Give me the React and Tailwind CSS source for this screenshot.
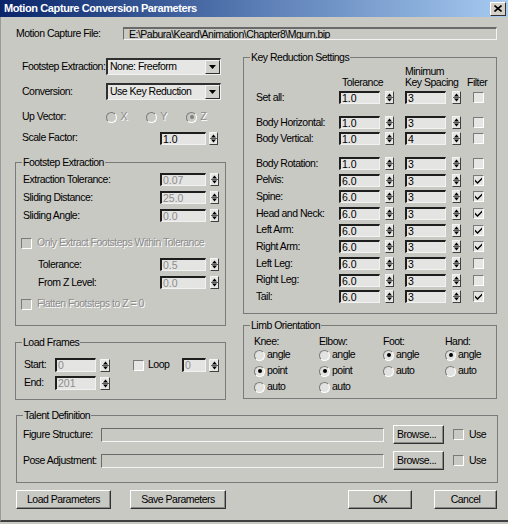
import React from "react";

const dimText = "text-[#8c8c8c] [text-shadow:1px_1px_0_#ffffff]";

const Spin = ({ className = "" }) => (
  <div
    className={
      "flex h-[13px] w-[9px] shrink-0 items-center justify-center border border-t-[#f4f4f4] border-l-[#f4f4f4] border-b-[#404040] border-r-[#404040] bg-[#e6e6e4] " +
      className
    }
  >
    <svg width="7" height="11" viewBox="0 0 7 11">
      <path d="M3.5 1.5 L6 4.5 H1 Z" fill="#000" />
      <path d="M0 5.5 H7" stroke="#5a5a5a" strokeWidth="1" />
      <path d="M1 6.5 H6 L3.5 9.5 Z" fill="#000" />
    </svg>
  </div>
);

const Field = ({ value, className = "", dim }) => (
  <div
    className={
      "h-[13px] shrink-0 overflow-hidden whitespace-nowrap border-t-2 border-l-2 border-b border-r border-t-[#1e1e1e] border-l-[#1e1e1e] border-b-[#f2f2f2] border-r-[#f2f2f2] bg-[#e4e4e2] pl-[1px] text-[10.5px] leading-[10px] " +
      (dim ? "text-[#8c8c8c]" : "text-black") +
      " " +
      className
    }
  >
    {value}
  </div>
);

const Check = ({ on, dim }) => (
  <div
    className={
      "flex h-[11px] w-[11px] shrink-0 items-center justify-center border border-t-[#7a7a7a] border-l-[#7a7a7a] border-b-white border-r-white " +
      (dim ? "bg-[#c9c9c4]" : "bg-[#e6e6e4]")
    }
  >
    {on && (
      <svg width="7" height="7" viewBox="0 0 7 7">
        <path d="M0 2.5 L2.5 5 L7 0.5 V2.5 L2.5 7 L0 4.5 Z" fill="#000" />
      </svg>
    )}
  </div>
);

const Radio = ({ on, dim }) => (
  <div
    className={
      "flex h-[11px] w-[11px] shrink-0 items-center justify-center rounded-full border border-t-[#7a7a7a] border-l-[#7a7a7a] border-b-white border-r-white " +
      (dim ? "bg-[#c9c9c4]" : "bg-[#e2e2e0]")
    }
  >
    {on && <div className={"h-[4px] w-[4px] rounded-full " + (dim ? "bg-[#808080]" : "bg-black")} />}
  </div>
);

const Btn = ({ children, className = "" }) => (
  <div
    className={
      "flex shrink-0 items-center justify-center border border-t-white border-l-white border-b-[#303030] border-r-[#303030] text-[10.5px] tracking-[-0.5px] shadow-[inset_-1px_-1px_0_#8a8a8a] " +
      className
    }
  >
    {children}
  </div>
);

const Combo = ({ value }) => (
  <div className="flex h-[17px] w-[115px] items-center border-t-2 border-l-2 border-b border-r border-t-[#303030] border-l-[#303030] border-b-[#f2f2f2] border-r-[#f2f2f2] bg-[#e6e6e4]">
    <span className="flex-1 pl-[2px] text-[10.5px] tracking-[-0.5px]">{value}</span>
    <div className="flex h-[14px] w-[15px] items-center justify-center border border-t-[#f4f4f4] border-l-[#f4f4f4] border-b-[#303030] border-r-[#303030] bg-[#d0d0cc]">
      <svg width="7" height="4" viewBox="0 0 7 4">
        <path d="M0 0 H7 L3.5 4 Z" fill="#000" />
      </svg>
    </div>
  </div>
);

const Group = ({ title, className = "", children }) => (
  <fieldset className={"border border-[#7a7a7a] " + className}>
    <legend className="ml-[6px] px-[1px] text-[10.5px] leading-[12px] tracking-[-0.5px]">{title}</legend>
    {children}
  </fieldset>
);

const keyRows = [
  ["Body Rotation:", "1.0", "3", false],
  ["Pelvis:", "6.0", "3", true],
  ["Spine:", "6.0", "3", true],
  ["Head and Neck:", "6.0", "3", true],
  ["Left Arm:", "6.0", "3", true],
  ["Right Arm:", "6.0", "3", true],
  ["Left Leg:", "6.0", "3", false],
  ["Right Leg:", "6.0", "3", false],
  ["Tail:", "6.0", "3", true],
];

const KeyRow = ({ label, tol, key2, on, className = "" }) => (
  <div className={"flex h-[13px] items-center " + className}>
    <span className="ml-[12px] w-[83px] text-[10.5px] tracking-[-0.5px]">{label}</span>
    <Field value={tol} className="w-[41px]" />
    <Spin className="ml-[5px]" />
    <Field value={key2} className="ml-[11px] w-[41px]" />
    <Spin className="ml-[6px]" />
    <div className="ml-[12px]">
      <Check on={on} />
    </div>
  </div>
);

const FootRow = ({ label, value, className = "", labelClass = "pl-[7px]" }) => (
  <div className={"flex h-[13px] items-center " + className}>
    <span className={"flex-1 text-[10.5px] tracking-[-0.5px] " + labelClass}>{label}</span>
    <Field value={value} dim className="w-[46px]" />
    <Spin className="ml-[4px] mr-[6px]" />
  </div>
);

const LimbCol = ({ title, items, className = "" }) => (
  <div className={"flex flex-col " + className}>
    <div className="h-[11px] text-[10.5px] leading-[11px] tracking-[-0.5px]">{title}</div>
    {items.map(([name, on]) => (
      <div key={name} className="flex h-[16px] items-center">
        <Radio on={on} />
        <span className="ml-[2px] text-[10.5px] tracking-[-0.5px]">{name}</span>
      </div>
    ))}
  </div>
);

export default function App() {
  return (
    <div className="h-[524px] w-[508px] overflow-hidden bg-[#c9c9c4] font-['Liberation_Sans',Arial,sans-serif] text-black">
      {/* title bar */}
      <div className="flex h-[17px] items-center bg-linear-to-r from-[#0a246a] via-[#5a7cb4] to-[#a6caf0]">
        <span className="pl-[4px] text-[11px] font-bold tracking-[-0.4px] text-white">
          Motion Capture Conversion Parameters
        </span>
        <div className="ml-auto mr-[2px] flex h-[14px] w-[16px] items-center justify-center border border-t-white border-l-white border-b-[#303030] border-r-[#303030] bg-[#d4d0c8]">
          <svg width="8" height="7" viewBox="0 0 8 7">
            <path d="M0.5 0.5 L7.5 6.5 M7.5 0.5 L0.5 6.5" stroke="#000" strokeWidth="1.6" />
          </svg>
        </div>
      </div>

      {/* body */}
      <div className="flex h-[505px] flex-col border-b-2 border-l border-b-[#404040] border-l-[#9a9a9a] pl-[14px] pr-[11px] pt-[10px]">
        <div className="flex h-[13px] items-center">
          <span className="w-[108px] pl-[1px] text-[10.5px] tracking-[-0.5px]">Motion Capture File:</span>
          <div className="h-[13px] flex-1 overflow-hidden whitespace-nowrap border-t-2 border-l border-b border-r border-t-[#6a6a6a] border-l-[#6a6a6a] border-b-[#f4f4f4] border-r-[#f4f4f4] pl-[5px] text-[10.5px] leading-[10px] tracking-[-0.5px]">
            E:\Pabura\Keard\Animation\Chapter8\Mgurn.bip
          </div>
        </div>

        <div className="mt-[11px] flex items-start">
          {/* left column */}
          <div className="flex w-[211px] flex-col">
            <div className="mt-[7px] flex h-[17px] items-center">
              <span className="w-[91px] pl-[7px] text-[10.5px] tracking-[-0.5px]">Footstep Extraction:</span>
              <Combo value="None: Freeform" />
            </div>
            <div className="mt-[8px] flex h-[17px] items-center">
              <span className="w-[91px] pl-[7px] text-[10.5px] tracking-[-0.5px]">Conversion:</span>
              <Combo value="Use Key Reduction" />
            </div>
            <div className="mt-[11px] flex h-[12px] items-center">
              <span className="w-[96px] pl-[7px] text-[10.5px] tracking-[-0.5px]">Up Vector:</span>
              {[
                ["X", false],
                ["Y", false],
                ["Z", true],
              ].map(([l, on]) => (
                <div key={l} className="flex w-[42px] items-center">
                  <Radio on={on} dim />
                  <span className={"ml-[3px] text-[10.5px] " + dimText}>{l}</span>
                </div>
              ))}
            </div>
            <div className="mt-[8px] flex h-[14px] items-center">
              <span className="w-[145px] pl-[7px] text-[10.5px] tracking-[-0.5px]">Scale Factor:</span>
              <Field value="1.0" className="w-[46px]" />
              <Spin className="ml-[3px]" />
            </div>

            <Group title="Footstep Extraction" className="mt-[11px] h-[170px]">
              <div className="flex flex-col pt-[5px]">
                <FootRow label="Extraction Tolerance:" value="0.07" />
                <FootRow label="Sliding Distance:" value="25.0" className="mt-[5px]" />
                <FootRow label="Sliding Angle:" value="0.0" className="mt-[5px]" />
                <div className="mt-[15px] flex h-[12px] items-center pl-[5px]">
                  <Check dim />
                  <span className={"ml-[5px] text-[10.5px] tracking-[-0.5px] " + dimText}>
                    Only Extract Footsteps Within Tolerance
                  </span>
                </div>
                <FootRow label="Tolerance:" value="0.5" className="mt-[9px]" labelClass="pl-[22px]" />
                <FootRow label="From Z Level:" value="0.0" className="mt-[5px]" labelClass="pl-[22px]" />
                <div className="mt-[9px] flex h-[12px] items-center pl-[5px]">
                  <Check dim />
                  <span className={"ml-[5px] text-[10.5px] tracking-[-0.5px] " + dimText}>
                    Flatten Footsteps to Z = 0
                  </span>
                </div>
              </div>
            </Group>

            <Group title="Load Frames" className="mt-[10px] h-[64px]">
              <div className="flex flex-col pt-[10px]">
                <div className="flex h-[14px] items-center">
                  <span className="w-[39px] pl-[8px] text-[10.5px] tracking-[-0.5px]">Start:</span>
                  <Field value="0" dim className="h-[14px] w-[41px]" />
                  <Spin className="ml-[4px] w-[10px]" />
                  <div className="ml-[23px]">
                    <Check />
                  </div>
                  <span className="ml-[4px] w-[34px] text-[10.5px] tracking-[-0.5px]">Loop</span>
                  <Field value="0" dim className="h-[14px] w-[24px]" />
                  <Spin className="ml-[3px] w-[10px]" />
                </div>
                <div className="mt-[4px] flex h-[14px] items-center">
                  <span className="w-[39px] pl-[8px] text-[10.5px] tracking-[-0.5px]">End:</span>
                  <Field value="201" dim className="h-[14px] w-[41px]" />
                  <Spin className="ml-[4px] w-[10px]" />
                </div>
              </div>
            </Group>
          </div>

          {/* right column */}
          <div className="ml-[17px] flex w-[254px] flex-col">
            <Group title="Key Reduction Settings" className="h-[263px]">
              <div className="flex flex-col">
                <div className="flex items-end pt-[3px] text-[10.5px] leading-[11px] tracking-[-0.5px]">
                  <div className="w-[95px]" />
                  <div className="w-[55px] pl-[3px]">Tolerance</div>
                  <div className="ml-[11px] flex w-[56px] flex-col">
                    <span>Minimum</span>
                    <span>Key Spacing</span>
                  </div>
                  <div className="ml-[6px]">Filter</div>
                </div>
                <KeyRow label="Set all:" tol="1.0" key2="3" on={false} className="mt-[3px]" />
                <KeyRow label="Body Horizontal:" tol="1.0" key2="3" on={false} className="mt-[12px]" />
                <KeyRow label="Body Vertical:" tol="1.0" key2="4" on={false} className="mt-[3px]" />
                <div className="mt-[12px] flex flex-col gap-[3.67px]">
                  {keyRows.map(([l, t, k, on]) => (
                    <KeyRow key={l} label={l} tol={t} key2={k} on={on} />
                  ))}
                </div>
              </div>
            </Group>

            <Group title="Limb Orientation" className="mt-[5px] h-[80px]">
              <div className="flex pl-[10px] pt-[5px]">
                <LimbCol
                  title="Knee:"
                  className="w-[65px]"
                  items={[
                    ["angle", false],
                    ["point", true],
                    ["auto", false],
                  ]}
                />
                <LimbCol
                  title="Elbow:"
                  className="w-[64px]"
                  items={[
                    ["angle", false],
                    ["point", true],
                    ["auto", false],
                  ]}
                />
                <LimbCol
                  title="Foot:"
                  className="w-[62px]"
                  items={[
                    ["angle", true],
                    ["auto", false],
                  ]}
                />
                <LimbCol
                  title="Hand:"
                  items={[
                    ["angle", true],
                    ["auto", false],
                  ]}
                />
              </div>
            </Group>
          </div>
        </div>

        <Group title="Talent Definition" className="mt-[9px] h-[74px] w-[482px] ml-[1px]">
          <div className="flex flex-col pt-[4px]">
            {["Figure Structure:", "Pose Adjustment:"].map((l, i) => (
              <div key={l} className={"flex h-[19px] items-center " + (i ? "mt-[7px]" : "")}>
                <span className="w-[84px] pl-[6px] text-[10.5px] tracking-[-0.5px]">{l}</span>
                <div className="h-[14px] w-[283px] border-t border-l border-b border-r border-t-[#6a6a6a] border-l-[#6a6a6a] border-b-[#f4f4f4] border-r-[#f4f4f4]" />
                <Btn className="ml-[9px] h-[19px] w-[51px] justify-start pl-[3px]">Browse...</Btn>
                <div className="ml-[9px]">
                  <Check dim />
                </div>
                <span className="ml-[5px] text-[10.5px] tracking-[-0.5px]">Use</span>
              </div>
            ))}
          </div>
        </Group>

        <div className="mt-[7px] ml-[1px] flex h-[19px]">
          <Btn className="h-[19px] w-[95px]">Load Parameters</Btn>
          <Btn className="ml-[19px] h-[19px] w-[96px]">Save Parameters</Btn>
          <Btn className="ml-[122px] h-[19px] w-[64px]">OK</Btn>
          <Btn className="ml-[22px] h-[19px] w-[63px]">Cancel</Btn>
        </div>
      </div>
    </div>
  );
}
